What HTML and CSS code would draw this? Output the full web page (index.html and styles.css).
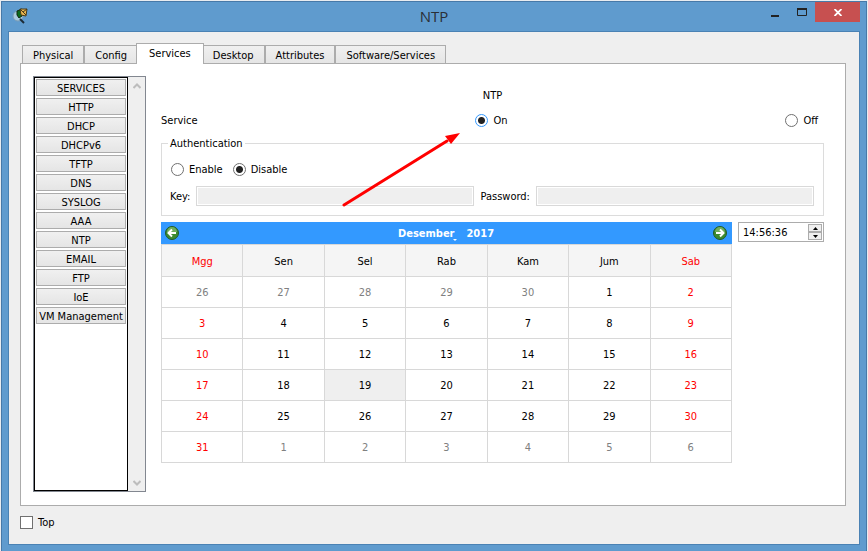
FILE: index.html
```html
<!DOCTYPE html>
<html lang="id">
<head>
    <meta charset="UTF-8">
    <meta name="viewport" content="width=device-width, initial-scale=1.0">
    <title>NTP</title>
    <link rel="stylesheet" href="styles.css">
</head>
<body>
    <div class="window">
        <header class="title-bar">
            <svg class="app-icon" width="18" height="16" viewBox="0 0 18 16">
                <circle cx="6" cy="8" r="5" fill="#a9cbe0" stroke="#7d9db5"/>
                <path d="M8 11l4 4" stroke="#1c2b36" stroke-width="2"/>
                <path d="M5 3l5-2v7l-3 2-2-3z" fill="#0a6b1c" stroke="#10280f"/>
                <path d="M8 1l7 0-1 7-5-1z" fill="#e9b64f" stroke="#4a3a18"/>
                <path d="M8 1l3 3 4-3M11 4l3 3" stroke="#4a3a18" fill="none"/>
            </svg>
            <h1 class="title">NTP</h1>
            <div class="window-buttons">
                <button class="window-button" aria-label="Minimize">
                    <svg width="10" height="12" viewBox="0 0 10 12"><path d="M1 10h8" stroke="#222" stroke-width="2"/></svg>
                </button>
                <button class="window-button" aria-label="Maximize">
                    <svg width="10" height="8" viewBox="0 0 10 8"><path d="M0 1h10" stroke="#222" stroke-width="2"/><path d="M.5 1v6.500h9V1" fill="none" stroke="#222"/></svg>
                </button>
                <button class="window-button close" aria-label="Close">
                    <svg width="8" height="7" viewBox="0 0 8 7"><path d="M.5 0l7 7M7.500 0l-7 7" stroke="#fff" stroke-width="1.800"/></svg>
                </button>
            </div>
        </header>

        <div class="content">
            <nav class="tabs">
                <button class="tab">Physical</button>
                <button class="tab">Config</button>
                <button class="tab active">Services</button>
                <button class="tab">Desktop</button>
                <button class="tab">Attributes</button>
                <button class="tab">Software/Services</button>
            </nav>

            <div class="panel">
                <aside class="sidebar">
                    <div class="service-list">
                        <button class="service">SERVICES</button>
                        <button class="service">HTTP</button>
                        <button class="service">DHCP</button>
                        <button class="service">DHCPv6</button>
                        <button class="service">TFTP</button>
                        <button class="service">DNS</button>
                        <button class="service">SYSLOG</button>
                        <button class="service">AAA</button>
                        <button class="service">NTP</button>
                        <button class="service">EMAIL</button>
                        <button class="service">FTP</button>
                        <button class="service">IoE</button>
                        <button class="service">VM Management</button>
                    </div>
                    <div class="scrollbar">
                        <svg width="8" height="6" viewBox="0 0 8 6"><path d="M.5 5l3.500-3.500L7.500 5" fill="none" stroke="#bdbdbd" stroke-width="2"/></svg>
                        <svg width="8" height="6" viewBox="0 0 8 6"><path d="M.5 1l3.500 3.500L7.500 1" fill="none" stroke="#bdbdbd" stroke-width="2"/></svg>
                    </div>
                </aside>

                <main class="main">
                    <h2 class="heading">NTP</h2>
                    <div class="service-row">
                        <span>Service</span>
                        <label class="option"><input type="radio" class="radio focused" name="service" checked>On</label>
                        <label class="option"><input type="radio" class="radio" name="service">Off</label>
                    </div>

                    <fieldset class="auth">
                        <legend>Authentication</legend>
                        <div class="auth-options">
                            <label class="option"><input type="radio" class="radio" name="auth">Enable</label>
                            <label class="option"><input type="radio" class="radio" name="auth" checked>Disable</label>
                        </div>
                        <div class="auth-fields">
                            <label for="key">Key:</label>
                            <input type="text" id="key" class="field" disabled>
                            <label for="password">Password:</label>
                            <input type="password" id="password" class="field" disabled>
                        </div>
                    </fieldset>

                    <div class="date-row">
                        <div class="calendar">
                            <div class="calendar-nav">
                                <button class="nav-button" aria-label="Previous month">
                                    <svg width="14" height="14" viewBox="0 0 14 14"><circle cx="7" cy="7" r="6.500" fill="#3c8a2e" stroke="#1f5a2c"/><path d="M2 6a5 5 0 0 1 10 0z" fill="#6fae5c"/><path d="M11 7H4M7 3.500L3.500 7 7 10.500" fill="none" stroke="#fff" stroke-width="2"/></svg>
                                </button>
                                <div class="month-year">
                                    <button class="month">Desember</button>
                                    <button class="year">2017</button>
                                </div>
                                <button class="nav-button" aria-label="Next month">
                                    <svg width="14" height="14" viewBox="0 0 14 14"><circle cx="7" cy="7" r="6.500" fill="#3c8a2e" stroke="#1f5a2c"/><path d="M2 6a5 5 0 0 1 10 0z" fill="#6fae5c"/><path d="M3 7h7M7 3.500L10.500 7 7 10.500" fill="none" stroke="#fff" stroke-width="2"/></svg>
                                </button>
                            </div>
                            <table class="days">
                                <thead>
                                    <tr><th class="red">Mgg</th><th>Sen</th><th>Sel</th><th>Rab</th><th>Kam</th><th>Jum</th><th class="red">Sab</th></tr>
                                </thead>
                                <tbody>
                                    <tr><td class="other">26</td><td class="other">27</td><td class="other">28</td><td class="other">29</td><td class="other">30</td><td>1</td><td class="red">2</td></tr>
                                    <tr><td class="red">3</td><td>4</td><td>5</td><td>6</td><td>7</td><td>8</td><td class="red">9</td></tr>
                                    <tr><td class="red">10</td><td>11</td><td>12</td><td>13</td><td>14</td><td>15</td><td class="red">16</td></tr>
                                    <tr><td class="red">17</td><td>18</td><td class="selected">19</td><td>20</td><td>21</td><td>22</td><td class="red">23</td></tr>
                                    <tr><td class="red">24</td><td>25</td><td>26</td><td>27</td><td>28</td><td>29</td><td class="red">30</td></tr>
                                    <tr><td class="red">31</td><td class="other">1</td><td class="other">2</td><td class="other">3</td><td class="other">4</td><td class="other">5</td><td class="other">6</td></tr>
                                </tbody>
                            </table>
                        </div>
                        <div class="time">
                            <input type="text" class="time-input" value="14:56:36" aria-label="Time">
                            <div class="spinner">
                                <button class="spin" aria-label="Up"><svg width="5" height="3" viewBox="0 0 5 3"><path d="M0 3L2.500 0 5 3z"/></svg></button>
                                <button class="spin" aria-label="Down"><svg width="5" height="3" viewBox="0 0 5 3"><path d="M0 0l2.500 3L5 0z"/></svg></button>
                            </div>
                        </div>
                    </div>

                    <!-- arrow pointing at the On option -->
                    <svg class="arrow" width="120" height="76" viewBox="0 0 120 76">
                        <path d="M2 74L105 10" stroke="#f00" stroke-width="3" stroke-linecap="round"/>
                        <path d="M118 2L109 13L106 9L103 5z" fill="#f00"/>
                    </svg>
                </main>
            </div>

            <label class="top-option"><input type="checkbox" class="checkbox">Top</label>
        </div>
    </div>
</body>
</html>
```
FILE: styles.css
```css
* {
    margin: 0;
    padding: 0;
    box-sizing: border-box;
}

body {
    font-family: "DejaVu Sans Condensed", "Noto Sans", sans-serif;
    font-size: 11px;
    line-height: 15px;
    color: #000;
    background: #e9ecf0;
    padding: 1px 1px 0;
    overflow-x: hidden;
}

button,
input {
    font: inherit;
    color: inherit;
}

button {
    border: none;
    background: none;
}

svg {
    display: block;
}

.window {
    background: #5f9bce;
    border: 1px solid #4779a8;
    border-bottom: none;
    padding: 0 6px 6px;
}

.title-bar {
    display: grid;
    grid-template-columns: 1fr auto 1fr;
    align-items: start;
    height: 29px;
}

.app-icon {
    margin: 6px 0 0 4px;
}

.title {
    font-family: "Open Sans", sans-serif;
    font-size: 15px;
    font-weight: normal;
    line-height: 28px;
    color: #2a2f36;
}

.window-buttons {
    display: flex;
    justify-content: flex-end;
}

.window-button {
    display: flex;
    align-items: center;
    justify-content: center;
    width: 27px;
    height: 20px;
}

.window-button.close {
    width: 45px;
    background: #c75050;
}

.content {
    background: #efefef;
    border: 1px solid #4a82b4;
    padding: 11px 13px 14px 11px;
}

.tabs {
    display: flex;
    align-items: flex-end;
    padding-left: 2px;
}

.tab {
    height: 18px;
    padding: 1px 10px 0;
    border: 1px solid #acacac;
    border-bottom: none;
    background: linear-gradient(#f0f0f0, #e5e5e5);
}

.tab.active {
    position: relative;
    height: 21px;
    padding: 0 12px 1px;
    margin: 0 -2px -1px;
    background: #fff;
}

.panel {
    display: flex;
    gap: 15px;
    padding: 12px 21px 13px 12px;
    border: 1px solid #acacac;
    background: #fff;
}

.sidebar {
    display: flex;
    flex: 0 0 113px;
    border: 1px solid #828790;
    background: #efefef;
}

.service-list {
    display: flex;
    flex-direction: column;
    gap: 2px;
    width: 94px;
    padding: 1px;
    border: 1px solid #000;
    background: #fff;
}

.service {
    height: 17px;
    padding-top: 1px;
    border: 1px solid #acacac;
    background: linear-gradient(#f0f0f0, #e5e5e5);
    white-space: nowrap;
}

.scrollbar {
    display: flex;
    flex: 1;
    flex-direction: column;
    justify-content: space-between;
    align-items: center;
    padding: 6px 0 5px;
}

.main {
    position: relative;
    flex: 1;
    padding: 12px 0 29px;
}

.heading {
    font-size: 11px;
    font-weight: normal;
    text-align: center;
}

.service-row {
    display: flex;
    justify-content: space-between;
    padding: 10px 6px 0 0;
}

.option {
    display: flex;
    align-items: center;
    gap: 5px;
}

.radio {
    appearance: none;
    width: 13px;
    height: 13px;
    border: 1px solid #707070;
    border-radius: 50%;
    background: #fff;
}

.radio:checked {
    background: radial-gradient(circle, #222 3px, #fff 4px);
}

.radio.focused {
    border-color: #3399ff;
}

.auth {
    margin-top: 8px;
    padding: 11px 9px 9px 8px;
    border: 1px solid #dcdcdc;
}

.auth legend {
    margin-left: -2px;
    padding: 0 2px;
}

.auth-options {
    display: flex;
    gap: 10px;
    padding-left: 1px;
}

.auth-fields {
    display: flex;
    align-items: center;
    gap: 6px;
    margin-top: 9px;
}

.field {
    flex: 1;
    min-width: 0;
    height: 20px;
    border: 1px solid #d9d9d9;
    background: #efefef;
    box-shadow: inset 0 0 0 1px #fff;
}

.date-row {
    display: flex;
    align-items: flex-start;
    gap: 6px;
    margin-top: 6px;
}

.calendar {
    flex: 1;
}

.calendar-nav {
    display: flex;
    align-items: center;
    justify-content: space-between;
    height: 22px;
    padding: 0 5px 0 4px;
    background: #3399ff;
}

.month-year {
    display: flex;
    gap: 12px;
    color: #fff;
    font-weight: bold;
}

.month {
    position: relative;
}

.month::after {
    content: "";
    position: absolute;
    right: -3px;
    bottom: 0;
    border: 2px solid transparent;
    border-top-color: #fff;
    border-bottom: none;
}

.days {
    width: 100%;
    table-layout: fixed;
    border-collapse: collapse;
    text-align: center;
}

.days th,
.days td {
    padding-top: 2px;
    border: 1px solid #d8d8d8;
    line-height: 28px;
}

.days th {
    font-weight: normal;
    line-height: 29px;
    background: #f5f5f5;
}

.days .red {
    color: #f00;
}

.days .other {
    color: #808080;
}

.days .selected {
    background: #efefef;
}

.time {
    display: flex;
    width: 86px;
    height: 20px;
    padding: 1px;
    border: 1px solid #acacac;
}

.time-input {
    flex: 1;
    min-width: 0;
    padding-left: 3px;
    border: none;
    outline: none;
    background: none;
}

.spinner {
    display: flex;
    flex-direction: column;
    width: 14px;
}

.spin {
    display: flex;
    flex: 1;
    align-items: center;
    justify-content: center;
    border: 1px solid #acacac;
    background: #efefef;
}

.arrow {
    position: absolute;
    top: 55px;
    left: 181px;
}

.top-option {
    display: flex;
    align-items: center;
    gap: 5px;
    width: fit-content;
    margin-top: 9px;
}

.checkbox {
    appearance: none;
    width: 13px;
    height: 13px;
    border: 1px solid #707070;
    background: #fff;
}
```
